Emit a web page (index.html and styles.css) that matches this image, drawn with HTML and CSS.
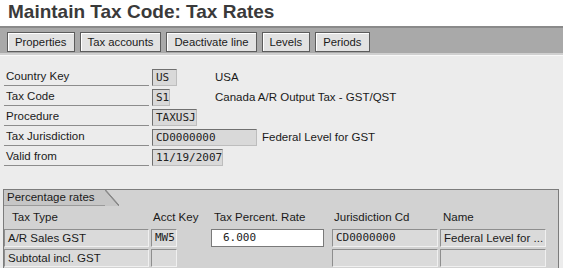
FILE: index.html
```html
<!DOCTYPE html>
<html lang="en">

<head>
  <meta charset="UTF-8">
  <title>Maintain Tax Code: Tax Rates</title>
  <link rel="stylesheet" href="styles.css">
</head>

<body>
  <h1 class="title">Maintain Tax Code: Tax Rates</h1>

  <div class="toolbar">
    <button class="tb-btn">Properties</button>
    <button class="tb-btn">Tax accounts</button>
    <button class="tb-btn">Deactivate line</button>
    <button class="tb-btn">Levels</button>
    <button class="tb-btn">Periods</button>
  </div>

  <div class="content">
    <div class="form">
      <div class="row">
        <div class="label">Country Key</div>
        <div class="field-wrap"><span class="field w-us">US</span></div>
        <div class="desc">USA</div>
      </div>
      <div class="row">
        <div class="label">Tax Code</div>
        <div class="field-wrap"><span class="field w-s1">S1</span></div>
        <div class="desc">Canada A/R Output Tax - GST/QST</div>
      </div>
      <div class="row">
        <div class="label">Procedure</div>
        <div class="field-wrap"><span class="field w-proc">TAXUSJ</span></div>
      </div>
      <div class="row">
        <div class="label">Tax Jurisdiction</div>
        <div class="field-wrap"><span class="field w-jur">CD0000000</span></div>
        <div class="desc">Federal Level for GST</div>
      </div>
      <div class="row">
        <div class="label">Valid from</div>
        <div class="field-wrap"><span class="field w-date">11/19/2007</span></div>
      </div>
    </div>

    <div class="group">
      <div class="group-tab">Percentage rates</div>
      <div class="grid">
        <div class="head c1">Tax Type</div>
        <div class="head c2">Acct Key</div>
        <div class="head c3">Tax Percent. Rate</div>
        <div class="head c4">Jurisdiction Cd</div>
        <div class="head c5">Name</div>

        <div class="cell c1">A/R Sales GST</div>
        <div class="cell c2 mono">MW5</div>
        <div class="cell c3 input mono">6.000</div>
        <div class="cell c4 mono">CD0000000</div>
        <div class="cell c5">Federal Level for ...</div>

        <div class="cell c1">Subtotal incl. GST</div>
        <div class="cell c2"></div>
        <div class="cell c3 blank"></div>
        <div class="cell c4"></div>
        <div class="cell c5"></div>

        <div class="cell c1"></div>
        <div class="cell c2"></div>
        <div class="cell c3 input"></div>
        <div class="cell c4"></div>
        <div class="cell c5"></div>
      </div>
    </div>
  </div>
</body>

</html>
```

FILE: styles.css
```css
body {
  margin: 0;
  background-color: #ececec;
  font-family: "Liberation Sans", Arial, sans-serif;
  color: #1a1a1a;
  overflow: hidden;
}

.title {
  margin: 0;
  height: 26px;
  padding: 1px 0 0 8px;
  box-sizing: border-box;
  background-color: #ffffff;
  font-size: 19px;
  font-weight: bold;
  color: #3a3a3a;
}

.toolbar {
  display: flex;
  gap: 5px;
  height: 29px;
  padding: 4px 0 0 7px;
  box-sizing: border-box;
  background-color: #a9a9a9;
  border-top: 2px solid #8a8a8a;
  border-bottom: 2px solid #d0d0d0;
}

.tb-btn {
  height: 20px;
  padding: 0 7px;
  background-color: #e2e2e2;
  border: 1px solid #5c5c5c;
  box-shadow: inset 1px 1px 0 #ffffff;
  font-family: inherit;
  font-size: 11.3px;
  color: #1a1a1a;
}

.content {
  padding-top: 11px;
  border-top: 1px solid #f8f8f8;
}

.row {
  display: flex;
  align-items: center;
  height: 20px;
}

.label {
  width: 143px;
  height: 17px;
  margin: 0 3px 0 4px;
  padding-left: 2px;
  border-bottom: 1px solid #8c8c8c;
  font-size: 11.5px;
  line-height: 17px;
}

.field-wrap {
  min-width: 58px;
}

.field {
  display: inline-block;
  height: 17px;
  padding-left: 3px;
  box-sizing: border-box;
  background-color: #d9d9d9;
  border: 1px solid #707070;
  border-right-color: #bdbdbd;
  border-bottom-color: #bdbdbd;
  font-family: "DejaVu Sans Mono", monospace;
  font-size: 11px;
  line-height: 15px;
  vertical-align: middle;
  color: #222222;
}

.w-us { width: 25px; }
.w-s1 { width: 18px; }
.w-proc { width: 45px; }
.w-jur { width: 105px; }
.w-date { width: 71px; }

.desc {
  margin-left: 5px;
  font-size: 11.5px;
}

.group {
  height: 100px;
  margin: 22px 4px 0 3px;
  background-color: #d2d2d2;
  border: 1px solid #7c7c7c;
}

.group-tab {
  position: relative;
  width: 98px;
  height: 15px;
  padding-left: 3px;
  background-color: #c6c6c6;
  border-bottom: 1px solid #9a9a9a;
  font-size: 11.5px;
  line-height: 15px;
}

.group-tab::after {
  content: "";
  position: absolute;
  right: -14px;
  top: 0;
  width: 14px;
  height: 16px;
  background: linear-gradient(to top right, #c6c6c6 46%, #8a8a8a 49%, #8a8a8a 53%, transparent 56%);
}

.grid {
  display: grid;
  grid-template-columns: 145px 28px 147px 114px 108px;
  row-gap: 2px;
  padding-top: 2px;
}

.c2 { margin-left: 2px; }
.c3 { margin-left: 34px; }
.c4 { margin-left: 8px; }
.c5 { margin-left: 2px; }

.head {
  height: 19px;
  padding-left: 3px;
  font-size: 11.5px;
  line-height: 19px;
  white-space: nowrap;
}

.head.c1 { padding-left: 8px; }
.head.c2,
.head.c4 { padding-left: 2px; }

.cell {
  height: 18px;
  box-sizing: border-box;
  padding-left: 3px;
  background-color: #dadada;
  border: 1px solid #8e8e8e;
  border-right-color: #f0f0f0;
  border-bottom-color: #f0f0f0;
  font-size: 11.5px;
  line-height: 16px;
  white-space: nowrap;
  overflow: hidden;
}

.cell.mono {
  font-family: "DejaVu Sans Mono", monospace;
  font-size: 11px;
  color: #222222;
}

.cell.input {
  padding-left: 11px;
  background-color: #ffffff;
  border-color: #7a7a7a;
}

.cell.blank {
  background: transparent;
  border-color: transparent;
}
```
